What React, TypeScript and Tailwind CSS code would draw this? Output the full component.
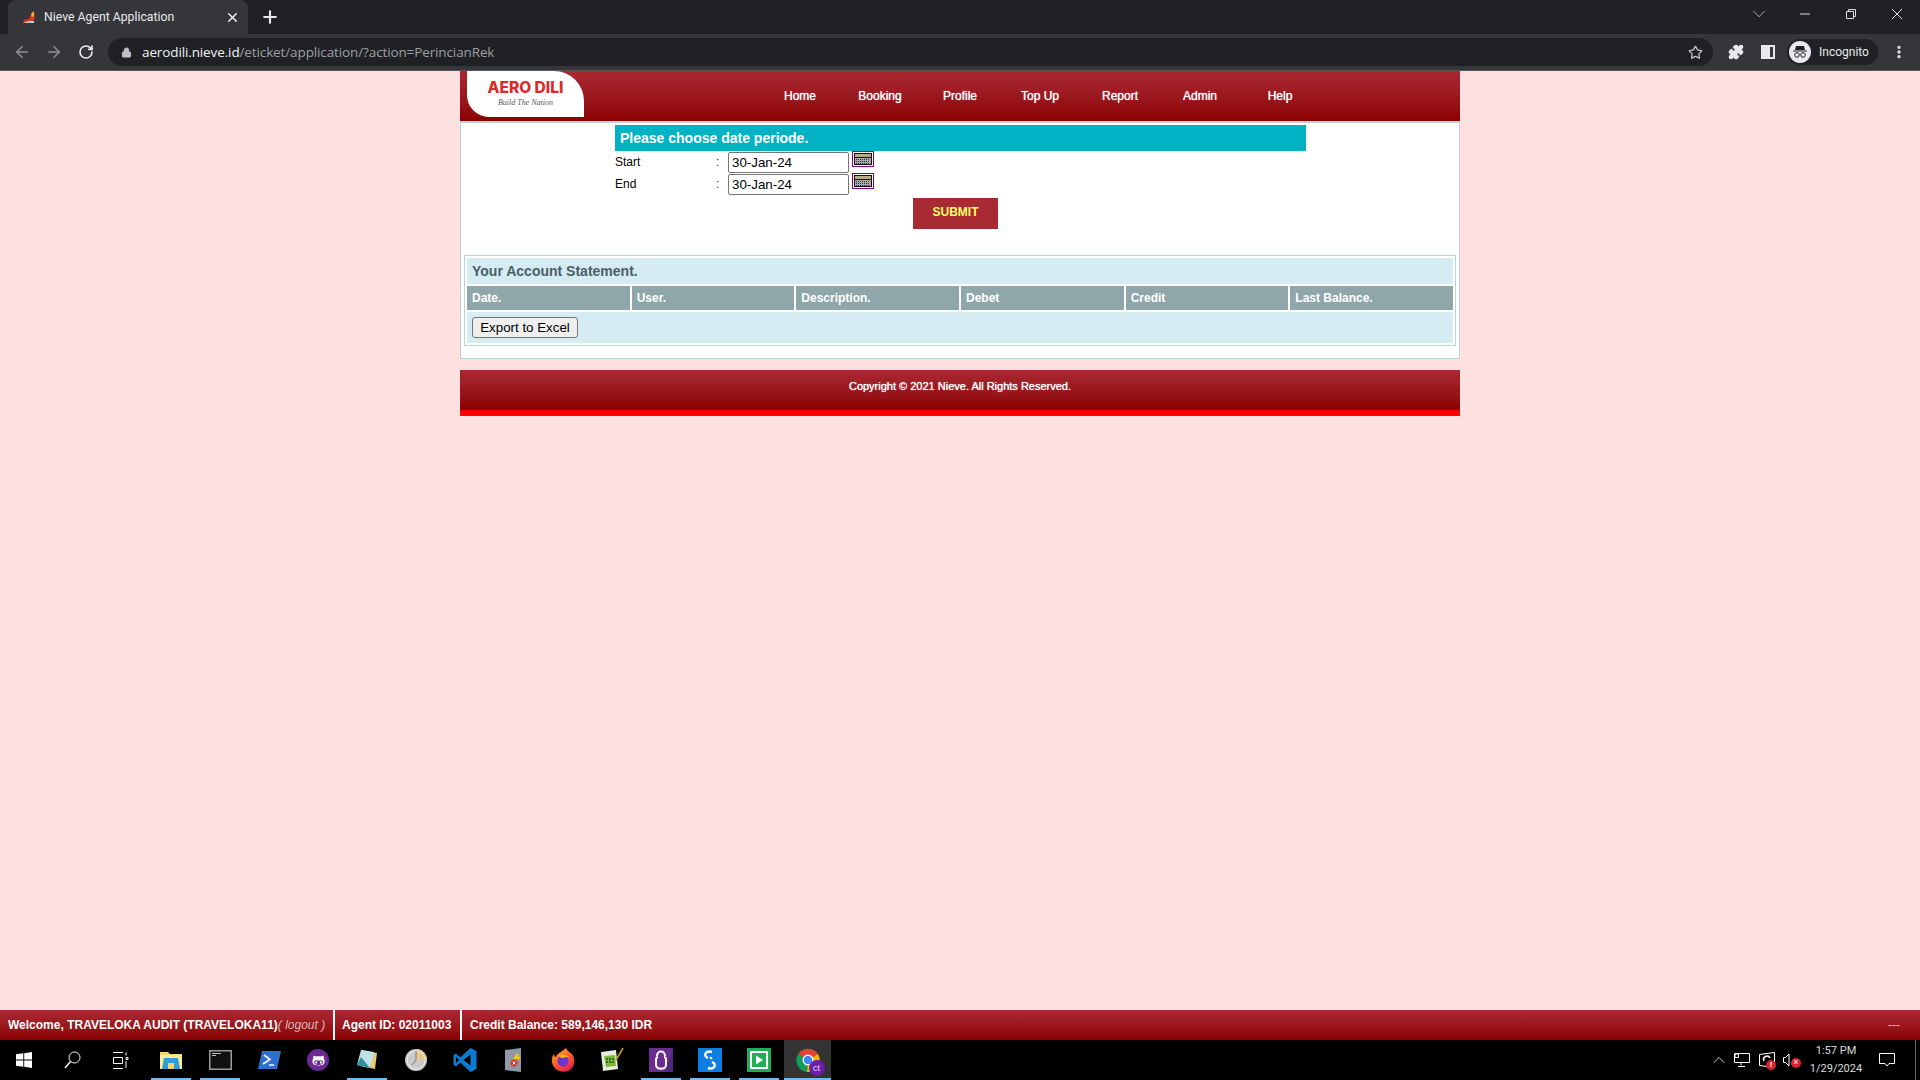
import React from 'react';
import {
  ArrowLeft,
  ArrowRight,
  ChevronDown,
  ChevronUp,
  Lock,
  MoreVertical,
  Plus,
  Puzzle,
  RotateCw,
  Star,
  X,
} from 'lucide-react';
import { FaGithubAlt } from 'react-icons/fa';

const navItems = ['Home', 'Booking', 'Profile', 'Top Up', 'Report', 'Admin', 'Help'];
const columns = ['Date.', 'User.', 'Description.', 'Debet', 'Credit', 'Last Balance.'];

const CalendarIcon = () => (
  <svg width="22" height="16" viewBox="0 0 22 16" className="block">
    <rect x="0.5" y="0.5" width="21" height="15" fill="#fff" stroke="#800080" />
    <rect x="2" y="2" width="18" height="12" fill="#111" />
    <rect x="3" y="3" width="16" height="3" fill="#b5ae86" />
    <rect x="3" y="7" width="16" height="6" fill="#a8a8a8" />
    <path d="M4 8.5h11M4 10.5h11M4 12.5h11" stroke="#333" strokeDasharray="1 1" />
    <path d="M16 8.5h2M16 10.5h2M16 12.5h2" stroke="#d11" strokeDasharray="1 1" />
  </svg>
);

const DateRow = ({ label }: { label: string }) => (
  <div className="flex items-start h-[22px] pl-[155px]">
    <span className="w-[101px] text-xs leading-[16px] pt-[3px] text-black">{label}</span>
    <span className="w-[12px] text-xs leading-[16px] pt-[3px] text-[#333]">:</span>
    <input
      readOnly
      value="30-Jan-24"
      className="w-[121px] h-[21px] mt-[1px] px-[3px] border border-[#767676] rounded-[2px] bg-white text-[13.33px] text-black outline-none"
    />
    <span className="ml-[3px]">
      <CalendarIcon />
    </span>
  </div>
);

const TaskIcon = ({ className, running, children }: { className: string; running?: boolean; children: React.ReactNode }) => (
  <div className={`relative h-[40px] flex items-center justify-center ${className}`}>
    {children}
    {running && <span className="absolute left-0 right-0 bottom-0 h-[2px] bg-[#76b9ed]" />}
  </div>
);

export default function App() {
  return (
    <div className="h-screen flex flex-col overflow-hidden bg-[#ffe0e0] font-['Liberation_Sans',Arial,sans-serif]">
      {/* browser tabs */}
      <div className="h-[34px] bg-[#202124] flex items-end pl-[8px] shrink-0">
        <div className="w-[240px] h-[34px] bg-[#35363a] rounded-t-lg flex items-center pl-[14px] pr-[8px]">
          <svg width="14" height="14" viewBox="0 0 14 14">
            <path d="M1 13l1-3 5-1 2-4 3-4 1 8-4 3z" fill="#d9381e" />
            <path d="M9 4l3-3 0 5-2 1z" fill="#f2b134" />
            <path d="M1 13l6-2 5 0 0 2z" fill="#ccc" />
          </svg>
          <span className="ml-[8px] flex-1 text-[12.25px] text-[#e8eaed] font-['Roboto',sans-serif]">Nieve Agent Application</span>
          <X size={15} strokeWidth={2.5} className="text-[#e8eaed]" />
        </div>
        <Plus size={20} strokeWidth={2.5} className="text-[#e8eaed] ml-[12px] mb-[7px]" />
        <div className="ml-auto flex items-center h-[34px] text-[#dadce0]">
          <ChevronDown size={22} strokeWidth={0.8} className="mr-[12px] mb-[6px]" />
          <svg width="46" height="34" viewBox="0 0 46 34">
            <path d="M18 14h10" stroke="currentColor" />
          </svg>
          <svg width="46" height="34" viewBox="0 0 46 34" fill="none" stroke="currentColor">
            <path d="M18.5 11.5h7v7h-7zM20.5 11.5v-2h7v7h-2" />
          </svg>
          <svg width="46" height="34" viewBox="0 0 46 34" stroke="currentColor">
            <path d="M18 9l10 10M28 9L18 19" />
          </svg>
        </div>
      </div>

      {/* browser toolbar */}
      <div className="box-content h-[36px] bg-[#35363a] flex items-center shrink-0 border-b border-[#55565a]">
        <ArrowLeft size={18} className="ml-[13px] text-[#8f9194]" />
        <ArrowRight size={18} className="ml-[14px] text-[#8f9194]" />
        <RotateCw size={16} strokeWidth={2.5} className="ml-[15px] text-[#e8eaed]" />
        <div className="ml-[14px] w-[1605px] h-[28px] rounded-full bg-[#202124] flex items-center pl-[13px] pr-[10px]">
          <Lock size={11} fill="#bdc1c6" className="text-[#bdc1c6]" />
          <span className="ml-[10px] flex-1 text-[13.5px] text-[#9aa0a6] font-['Open_Sans',sans-serif] tracking-[-0.12px]">
            <span className="text-[#f1f3f4]">aerodili.nieve.id</span>/eticket/application/?action=PerincianRek
          </span>
          <Star size={15} className="text-[#c4c7c5]" />
        </div>
        <Puzzle size={16} fill="#e8eaed" className="ml-[15px] text-[#e8eaed]" />
        <svg width="14" height="14" viewBox="0 0 14 14" className="ml-[17px]">
          <path d="M0 0h14v14H0z" fill="#e8eaed" />
          <path d="M9 2h3v10H9z" fill="#35363a" />
        </svg>
        <div className="ml-[12px] w-[91px] h-[26px] rounded-full bg-[#202124] flex items-center pl-[2px]">
          <div className="w-[22px] h-[22px] rounded-full bg-[#e8eaed] flex items-center justify-center">
            <svg width="16" height="16" viewBox="0 0 16 16">
              <path d="M4 2h8l1 4H3z" fill="#202124" />
              <path d="M1 6.5h14v1H1z" fill="#202124" />
              <circle cx="5" cy="11" r="2.3" fill="none" stroke="#202124" />
              <circle cx="11" cy="11" r="2.3" fill="none" stroke="#202124" />
            </svg>
          </div>
          <span className="ml-[8px] text-xs text-[#e8eaed] font-['Roboto',sans-serif]">Incognito</span>
        </div>
        <MoreVertical size={16} strokeWidth={3} className="ml-[13px] text-[#e8eaed]" />
      </div>

      {/* page */}
      <div className="flex-1 min-h-0">
        <div className="w-[1000px] ml-[460px]">
          <header className="h-[50px] flex bg-gradient-to-b from-[#aa2832] to-[#8b0000]">
            <div className="ml-[7px] w-[117px] h-[46px] bg-white rounded-tr-[30px] rounded-bl-[22px] flex flex-col items-center pt-[9px]">
              <span className="text-[15.5px] leading-[15px] font-extrabold text-[#dc2a2a] font-['Inter',sans-serif]">AERO DILI</span>
              <span className="mt-[3px] text-[8px] leading-[10px] italic text-[#555] font-['Liberation_Serif',serif]">Build The Nation</span>
            </div>
            <nav className="ml-[176px] flex">
              {navItems.map((item) => (
                <a key={item} className="w-[80px] text-center text-xs leading-[50px] text-white [text-shadow:0_0_1px_#fff]">
                  {item}
                </a>
              ))}
            </nav>
          </header>

          <div className="h-[238px] bg-white border border-t-2 border-[#b8d4da] border-r-[#c9d3d6] border-t-[#c9d3d6]">
            <div className="ml-[154px] mt-[2px] w-[691px] h-[26px] bg-[#00b3c4] pl-[5px] text-sm leading-[26px] font-bold text-white">
              Please choose date periode.
            </div>
            <div className="-ml-[1px]">
              <DateRow label="Start" />
              <DateRow label="End" />
            </div>
            <div className="ml-[452px] mt-[3px] w-[85px] h-[31px] bg-[#a82a33] text-center text-xs leading-[28px] font-bold text-[#ffff66]">
              SUBMIT
            </div>
            <div className="mx-[3px] mt-[26px] border border-[#b8d4da] p-[2px] h-[91px]">
              <div className="h-[26px] bg-[#d4ecf2] pl-[5px] text-sm leading-[26px] font-bold text-[#4a5f66]">
                Your Account Statement.
              </div>
              <div className="mt-[2px] grid grid-cols-6 gap-[2px]">
                {columns.map((col) => (
                  <div key={col} className="h-[24px] bg-[#8fa7aa] pl-[5px] text-xs leading-[24px] font-bold text-white">
                    {col}
                  </div>
                ))}
              </div>
              <div className="mt-[2px] h-[31px] bg-[#d4ecf2] pl-[5px] pt-[5px]">
                <button className="block w-[106px] h-[21px] border border-[#767676] rounded-[3px] bg-[#efefef] text-[13.33px] leading-[19px] text-black">
                  Export to Excel
                </button>
              </div>
            </div>
          </div>

          <footer className="mt-[11px] h-[46px] border-b-[6px] border-[#ff0000] bg-gradient-to-b from-[#aa2832] to-[#8b0000] text-center text-[11px] leading-[32px] text-white [text-shadow:0_0_1px_#fff]">
            Copyright © 2021 Nieve. All Rights Reserved.
          </footer>
        </div>
      </div>

      {/* status bar */}
      <div className="h-[30px] shrink-0 flex items-center bg-gradient-to-b from-[#aa2832] to-[#8b0000] text-xs font-bold text-white">
        <div className="w-[335px] h-full pl-[8px] leading-[30px] border-r-2 border-white whitespace-nowrap">
          Welcome, TRAVELOKA AUDIT (TRAVELOKA11)
          <span className="italic font-normal text-[#d8b8b8]">( logout )</span>
        </div>
        <div className="w-[127px] h-full pl-[7px] leading-[30px] border-r-2 border-white">Agent ID: 02011003</div>
        <div className="pl-[8px]">Credit Balance: 589,146,130 IDR</div>
        <span className="ml-auto mr-[20px] font-normal text-[#e8c8c8]">---</span>
      </div>

      {/* taskbar */}
      <div className="h-[40px] shrink-0 bg-black flex items-center text-white">
        <TaskIcon className="w-[48px]">
          <svg width="16" height="16" viewBox="0 0 16 16" fill="#fff">
            <path d="M0 2.3l7.3-1v6.2H0zM8.2 1.2L16 0v7.5H8.2zM0 8.5h7.3v6.2L0 13.7zM8.2 8.5H16V16l-7.8-1.2z" />
          </svg>
        </TaskIcon>
        <TaskIcon className="w-[48px]">
          <svg width="17" height="18" viewBox="0 0 17 18" fill="none" stroke="#fff">
            <circle cx="10.5" cy="6.5" r="5.5" />
            <path d="M6.5 10.5L1 17" strokeWidth="1.4" />
          </svg>
        </TaskIcon>
        <TaskIcon className="w-[48px]">
          <svg width="17" height="17" viewBox="0 0 17 17" fill="none" stroke="#fff">
            <path d="M1 .5h10M1 16.5h10M1.5 5.5h9v6h-9zM14 .5v3M14 5.5h2v2h-2zM14 9v7" />
          </svg>
        </TaskIcon>
        <TaskIcon running className="w-[40px] ml-[7px]">
          <svg width="22" height="20" viewBox="0 0 22 20">
            <path d="M0 2h8l2 2h12v15H0z" fill="#f6d36b" />
            <path d="M0 5h22v14H0z" fill="#ffe89c" />
            <path d="M4 8h14l2 11H2z" fill="#2b9fd9" />
            <path d="M8 13h6v6H8z" fill="#f6d36b" />
          </svg>
        </TaskIcon>
        <TaskIcon running className="w-[40px] ml-[9px]">
          <svg width="23" height="20" viewBox="0 0 23 20">
            <rect x="0.75" y="0.75" width="21.5" height="18.5" fill="#111" stroke="#9a9a9a" strokeWidth="1.5" />
            <path d="M3 3h9v1H3zM3 5h4v1H3z" fill="#bbb" />
          </svg>
        </TaskIcon>
        <TaskIcon className="w-[40px] ml-[9px]">
          <svg width="23" height="18" viewBox="0 0 23 18">
            <path d="M4 0h19l-4 18H0z" fill="#2f6fd0" />
            <path d="M6 4l6 4.5L5 13" fill="none" stroke="#fff" strokeWidth="1.6" />
            <path d="M11 14h5" stroke="#fff" strokeWidth="1.4" />
          </svg>
        </TaskIcon>
        <TaskIcon className="w-[40px] ml-[9px]">
          <div className="w-[22px] h-[22px] rounded-full bg-[#6b2a93] flex items-center justify-center">
            <FaGithubAlt size={13} className="text-white" />
          </div>
        </TaskIcon>
        <TaskIcon running className="w-[40px] ml-[9px]">
          <svg width="22" height="22" viewBox="0 0 22 22">
            <path d="M6 1l15 3-2 16-15-3z" fill="#e8c87a" />
            <path d="M5 1l13 2-4 16L1 16z" fill="#bfe3e8" />
            <path d="M1 16l4-8 9 11z" fill="#2f8f9d" />
          </svg>
        </TaskIcon>
        <TaskIcon className="w-[40px] ml-[9px]">
          <svg width="24" height="24" viewBox="0 0 24 24">
            <circle cx="12" cy="12" r="11" fill="#c9c9c9" />
            <path d="M12 1a11 11 0 0 1 11 11H12z" fill="#e3c690" />
            <circle cx="12" cy="12" r="9" fill="none" stroke="#eee" />
            <path d="M12 12V3M12 12l-4 5" stroke="#777" />
          </svg>
        </TaskIcon>
        <TaskIcon className="w-[40px] ml-[9px]">
          <svg width="24" height="24" viewBox="0 0 24 24">
            <path
              fillRule="evenodd"
              d="M17.5 0L23.5 3V21L17.5 24L7.5 14.8L3 18.2L.5 17V7L3 5.8L7.5 9.2zM17.5 6.5L10.5 12L17.5 17.5zM3 9V15L6 12z"
              fill="#0a7ccf"
            />
          </svg>
        </TaskIcon>
        <TaskIcon className="w-[40px] ml-[9px]">
          <svg width="18" height="24" viewBox="0 0 18 24">
            <path d="M0 2l16-2v24L0 22z" fill="#8e98a6" />
            <path d="M12 5l4 6H8z" fill="#f5c518" />
            <circle cx="9" cy="15" r="3.5" fill="#d9342b" />
            <path d="M7.5 13.5l3 3M10.5 13.5l-3 3" stroke="#fff" />
          </svg>
        </TaskIcon>
        <TaskIcon className="w-[40px] ml-[9px]">
          <svg width="24" height="24" viewBox="0 0 24 24">
            <defs>
              <linearGradient id="ff" x1="0" y1="0" x2="0.6" y2="1">
                <stop offset="0" stopColor="#ffb51f" />
                <stop offset="0.6" stopColor="#ff5a2b" />
                <stop offset="1" stopColor="#e6224f" />
              </linearGradient>
            </defs>
            <path d="M15 0c1 3 4 4 6 6 3 4 3 10 0 14-4 5-13 5-17 0C0 16 0 10 3 6c0 2 1 3 2 3 1-4 6-5 10-9z" fill="url(#ff)" />
            <circle cx="12" cy="13" r="5.5" fill="#6a35c9" />
            <path d="M8 8c2-2 7-2 9 1-2 0-4 0-5 1-2 0-3-1-4-2z" fill="#ffb51f" />
          </svg>
        </TaskIcon>
        <TaskIcon className="w-[40px] ml-[9px]">
          <svg width="24" height="24" viewBox="0 0 24 24">
            <path d="M1 4l15-2 2 19L3 23z" fill="#e9eddc" />
            <path d="M4 8l11-1 1 11-10 1z" fill="#7db83a" />
            <path d="M6 11h8M6 14h8" stroke="#24521e" strokeWidth="1.5" strokeDasharray="2 1" />
            <path d="M23 0l-7 12" stroke="#c79a2b" strokeWidth="1.6" />
          </svg>
        </TaskIcon>
        <TaskIcon running className="w-[40px] ml-[9px]">
          <svg width="24" height="24" viewBox="0 0 24 24">
            <rect width="24" height="24" fill="#6a2c91" />
            <path d="M16 24L24 0v24z" fill="#4b2a80" />
            <path d="M8 8c0-6 8-6 8 0M7 12c0-2 1-3 2-3M17 12c0-2-1-3-2-3M7 12v5c0 5 10 5 10 0v-5" fill="none" stroke="#fff" strokeWidth="2" />
          </svg>
        </TaskIcon>
        <TaskIcon running className="w-[40px] ml-[9px]">
          <svg width="24" height="24" viewBox="0 0 24 24">
            <rect width="24" height="24" fill="#0e7fe0" />
            <path d="M14 4c-7-2-9 4-4 6M10 20c7 2 9-4 4-6" fill="none" stroke="#fff" strokeWidth="2.4" />
            <circle cx="13" cy="10" r="1.3" fill="#fff" />
          </svg>
        </TaskIcon>
        <TaskIcon running className="w-[40px] ml-[9px]">
          <svg width="24" height="24" viewBox="0 0 24 24">
            <rect width="24" height="24" fill="#1fae55" />
            <rect x="3" y="3" width="18" height="18" fill="#fff" />
            <rect x="5" y="5" width="14" height="14" fill="#1fae55" />
            <path d="M9 7.5l7 4.5-7 4.5z" fill="#fff" />
          </svg>
        </TaskIcon>
        <TaskIcon running className="w-[47px] ml-[5px] bg-[#333]">
          <div className="relative w-[24px] h-[24px]">
            <svg width="24" height="24" viewBox="0 0 24 24">
              <path d="M12 12L2 6a12 12 0 0 1 20 0z" fill="#db4437" />
              <path d="M12 12L2 6a12 12 0 0 0 9 18z" fill="#0f9d58" />
              <path d="M12 12l10-6a12 12 0 0 1-11 18z" fill="#f4b400" />
              <circle cx="12" cy="12" r="5.5" fill="#fff" />
              <circle cx="12" cy="12" r="4.3" fill="#4285f4" />
            </svg>
            <div className="absolute -right-[5px] -bottom-[4px] w-[16px] h-[16px] rounded-full bg-[#6a1fa8] text-center text-[9px] leading-[16px] text-[#e8d8f2]">
              ct
            </div>
          </div>
        </TaskIcon>

        {/* tray */}
        <div className="ml-auto flex items-center h-full">
          <ChevronUp size={20} strokeWidth={1} />
          <svg width="16" height="14" viewBox="0 0 16 14" fill="none" stroke="#fff" className="ml-[5px]">
            <path d="M.5.5h15v9H.5zM7 9.5v3M4 13.5h7" />
            <path d="M1 1h3.5v3.5H1z" fill="#000" />
          </svg>
          <div className="relative ml-[9px] w-[16px] h-[16px]">
            <svg width="16" height="16" viewBox="0 0 16 16" fill="none" stroke="#fff">
              <path d="M.5 2.5l15-2v15l-15-2z" />
              <path d="M5 9a3 3 0 0 1 6-3" strokeWidth="1.5" />
            </svg>
            <span className="absolute -right-[1px] -bottom-[2px] w-[10px] h-[10px] rounded-full bg-[#d8232f] text-center text-[8px] leading-[10px] font-bold text-white">
              !
            </span>
          </div>
          <div className="relative ml-[8px] w-[16px] h-[14px]">
            <svg width="10" height="14" viewBox="0 0 10 14" fill="none" stroke="#fff">
              <path d="M.5 4.5h2l3.5-3.5v12L2.5 9.5h-2z" />
            </svg>
            <span className="absolute right-[-2px] bottom-[-1px] w-[10px] h-[10px] rounded-full bg-[#d8232f] text-center text-[9px] leading-[9px] text-white">
              ×
            </span>
          </div>
          <div className="ml-[4px] w-[66px] text-center text-[11px] leading-[18px] text-[#dcdcdc] font-['Roboto',sans-serif]">
            <div>1:57 PM</div>
            <div>1/29/2024</div>
          </div>
          <svg width="16" height="16" viewBox="0 0 16 16" fill="none" stroke="#fff" className="ml-[10px]">
            <path d="M.5 1.5h15v10H10l-2 2.5-2-2.5H.5z" />
          </svg>
          <div className="ml-[20px] mr-[4px] w-[1px] h-[40px] bg-[#666]" />
        </div>
      </div>
    </div>
  );
}
